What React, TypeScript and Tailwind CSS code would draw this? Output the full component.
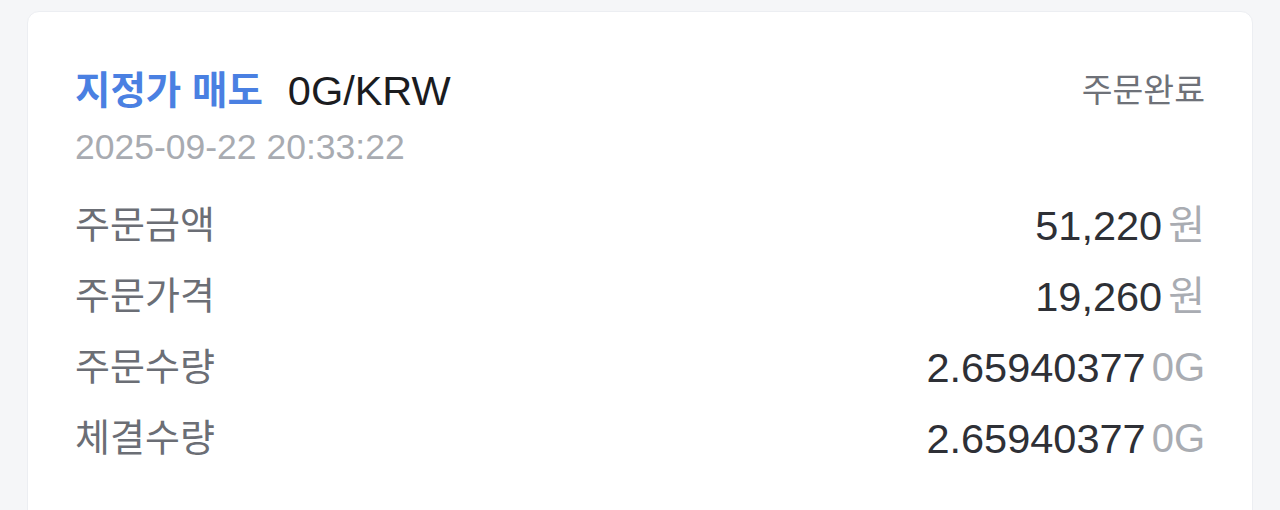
import React from "react";

const rows = [
  { label: "주문금액", value: "51,220", unit: "원" },
  { label: "주문가격", value: "19,260", unit: "원" },
  { label: "주문수량", value: "2.65940377", unit: "0G" },
  { label: "체결수량", value: "2.65940377", unit: "0G" },
];

export default function App() {
  return (
    <div
      className="min-h-[510px] w-full bg-[#f5f6f8] pl-[27px] pr-[27px] pt-[11px]"
      style={{ fontFamily: '"Liberation Sans", "Noto Sans CJK KR", sans-serif' }}
    >
      <div className="h-[520px] rounded-[12px] border border-[#eceef2] bg-white px-[47px] pt-[55px]">
        <div className="flex h-[48px] items-center justify-between">
          <div className="flex items-center">
            <span className="text-[38.5px] font-bold leading-[48px] text-[#4a80e2]">지정가 매도</span>
            <span className="ml-[25px] text-[41.5px] leading-[48px] text-[#1b1c1f]">0G/KRW</span>
          </div>
          <span className="text-[33.5px] leading-[48px] text-[#6e7178]">주문완료</span>
        </div>
        <div className="mt-[10px] h-[44px] text-[35.5px] leading-[44px] text-[#a8abb1]">2025-09-22 20:33:22</div>
        <div className="mt-[21px] flex flex-col">
          {rows.map((r) => (
            <div key={r.label} className="flex h-[71px] items-center justify-between">
              <span className="text-[38px] leading-[71px] text-[#6b6e75]">{r.label}</span>
              <span className="flex items-center leading-[71px]">
                <span className="text-[41.5px] text-[#2e3036]">{r.value}</span>
                <span className="ml-[6px] text-[40px] text-[#a9acb2]">{r.unit}</span>
              </span>
            </div>
          ))}
        </div>
      </div>
    </div>
  );
}
